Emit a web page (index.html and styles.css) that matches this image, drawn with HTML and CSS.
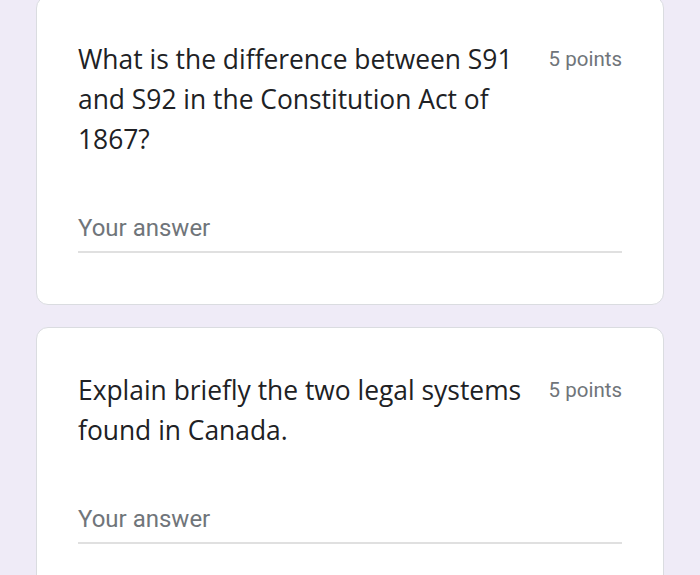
FILE: index.html
```html
<!DOCTYPE html>
<html>
<head>
<meta charset="utf-8">
<link rel="stylesheet" href="styles.css">
</head>
<body>
<div class="form">
  <div class="card">
    <div class="head">
      <div class="question">What is the difference between S91 and S92 in the Constitution Act of 1867?</div>
      <div class="points">5 points</div>
    </div>
    <div class="answer">Your answer</div>
  </div>
  <div class="card">
    <div class="head">
      <div class="question">Explain briefly the two legal systems found in Canada.</div>
      <div class="points">5 points</div>
    </div>
    <div class="answer">Your answer</div>
  </div>
</div>
</body>
</html>
```

FILE: styles.css
```css
html, body {
  margin: 0;
  padding: 0;
  background: #efebf7;
  overflow: hidden;
}
.form {
  padding: 0 36px;
  margin-top: -4px;
  display: flex;
  flex-direction: column;
  gap: 22px;
}
.card {
  background: #ffffff;
  border: 1px solid #dadce0;
  border-radius: 12px;
  padding: 42px 41px 51px 41px;
}
.head {
  display: flex;
  align-items: flex-start;
}
.question {
  flex: 1;
  font-family: "Open Sans", "Liberation Sans", sans-serif;
  font-size: 26.4px;
  line-height: 40px;
  color: #202124;
}
.points {
  flex: none;
  margin-left: 12px;
  font-family: Roboto, "Liberation Sans", sans-serif;
  font-size: 20.5px;
  line-height: 40px;
  color: #70757a;
}
.answer {
  margin-top: 57px;
  font-family: Roboto, "Liberation Sans", sans-serif;
  font-size: 24px;
  line-height: 24px;
  color: #70757a;
  padding-bottom: 11px;
  border-bottom: 2px solid #e0e0e0;
}
```
